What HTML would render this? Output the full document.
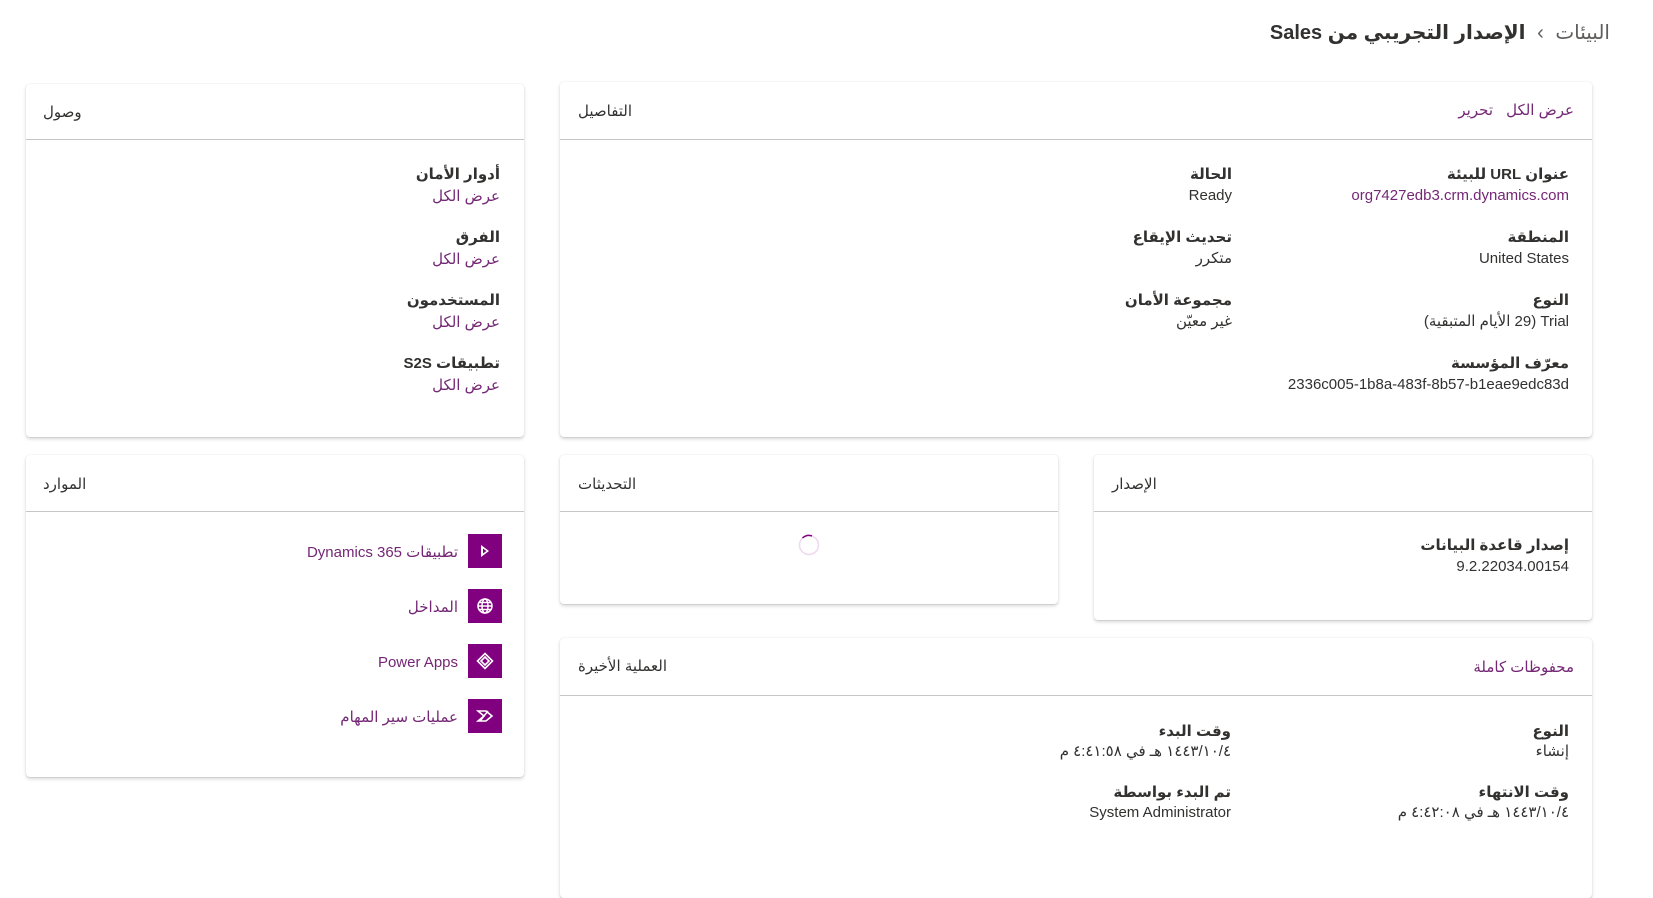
<!DOCTYPE html>
<html><head><meta charset="utf-8">
<style>
*{margin:0;padding:0;box-sizing:border-box}
body{width:1653px;height:835px;overflow:hidden;background:#fff;font-family:"Liberation Sans","DejaVu Sans",sans-serif;color:#323130;position:relative}
.card{position:absolute;background:#fff;border-radius:4px;box-shadow:0 1.6px 3.6px rgba(0,0,0,.16),0 0.3px 0.9px rgba(0,0,0,.12)}
.hl{position:absolute;left:0;right:0;height:1px;background:#c8c6c4}
.t{position:absolute;white-space:nowrap;font-size:15px;line-height:20px;direction:rtl}
.b{font-weight:bold;font-size:15px}
.p{color:#742774}
.ht{position:absolute;font-size:15px;line-height:20px;white-space:nowrap}
.ic{position:absolute;width:34px;height:34px;background:#80007f;display:flex;align-items:center;justify-content:center}
</style></head><body>

<div class="t" style="right:43px;top:20px;font-size:20px;line-height:26px"><span style="color:#605e5c">البيئات</span> <span style="color:#605e5c;font-size:20px;margin:0 6px">&rsaquo;</span> <span style="font-weight:bold">الإصدار التجريبي من Sales</span></div>

<!-- Access card -->
<div class="card" style="left:26px;top:84px;width:498px;height:353px">
  <div class="ht" style="left:17px;top:19px">وصول</div>
  <div class="hl" style="top:55px"></div>
</div>
<div class="t b" style="right:1153px;top:165px">أدوار الأمان</div>
<div class="t p" style="right:1153px;top:187px">عرض الكل</div>
<div class="t b" style="right:1153px;top:228px">الفرق</div>
<div class="t p" style="right:1153px;top:250px">عرض الكل</div>
<div class="t b" style="right:1153px;top:291px">المستخدمون</div>
<div class="t p" style="right:1153px;top:313px">عرض الكل</div>
<div class="t b" style="right:1153px;top:354px">تطبيقات S2S</div>
<div class="t p" style="right:1153px;top:376px">عرض الكل</div>

<!-- Details card -->
<div class="card" style="left:560px;top:82px;width:1032px;height:355px">
  <div class="ht" style="left:18px;top:20px">التفاصيل</div>
  <div class="hl" style="top:57px"></div>
</div>
<div class="t p" style="right:79px;top:101px">عرض الكل</div>
<div class="t p" style="right:160px;top:101px">تحرير</div>

<div class="t b" style="right:84px;top:165px">عنوان URL للبيئة</div>
<div class="t p" style="right:84px;top:186px">org7427edb3.crm.dynamics.com</div>
<div class="t b" style="right:84px;top:228px">المنطقة</div>
<div class="t" style="right:84px;top:249px">United States</div>
<div class="t b" style="right:84px;top:291px">النوع</div>
<div class="t" style="right:84px;top:312px">Trial (29 الأيام المتبقية)</div>
<div class="t b" style="right:84px;top:354px">معرّف المؤسسة</div>
<div class="t" style="right:84px;top:375px">2336c005-1b8a-483f-8b57-b1eae9edc83d</div>

<div class="t b" style="right:421px;top:165px">الحالة</div>
<div class="t" style="right:421px;top:186px">Ready</div>
<div class="t b" style="right:421px;top:228px">تحديث الإيقاع</div>
<div class="t" style="right:421px;top:249px">متكرر</div>
<div class="t b" style="right:421px;top:291px">مجموعة الأمان</div>
<div class="t" style="right:421px;top:312px">غير معيّن</div>

<!-- Resources card -->
<div class="card" style="left:26px;top:455px;width:498px;height:322px">
  <div class="ht" style="left:17px;top:20px">الموارد</div>
  <div class="hl" style="top:56px"></div>
</div>
<div class="ic" style="left:468px;top:534px"><svg width="16" height="16" viewBox="0 0 16 16"><path d="M4 2 L12 8 L4 14 Z M6 5.5 L6 10.5 L9.5 8 Z" fill="#fff" fill-rule="evenodd"/></svg></div>
<div class="t p" style="right:1195px;top:543px">تطبيقات Dynamics 365</div>
<div class="ic" style="left:468px;top:589px"><svg width="18" height="18" viewBox="0 0 18 18" fill="none" stroke="#fff" stroke-width="1.5"><circle cx="9" cy="9" r="7"/><ellipse cx="9" cy="9" rx="3" ry="7"/><path d="M2 9h14M3 5.5h12M3 12.5h12"/></svg></div>
<div class="t p" style="right:1195px;top:598px">المداخل</div>
<div class="ic" style="left:468px;top:644px"><svg width="18" height="18" viewBox="0 0 18 18" fill="none" stroke="#fff" stroke-width="1.6"><path d="M9 1.5 L16.5 9 L9 16.5 L1.5 9 Z"/><path d="M9 5 L13 9 L9 13 L5 9 Z"/></svg></div>
<div class="t p" style="right:1195px;top:653px">Power Apps</div>
<div class="ic" style="left:468px;top:699px"><svg width="18" height="18" viewBox="0 0 18 18" fill="none" stroke="#fff" stroke-width="1.6"><path d="M2 4h8l6 5-6 5H2l6-5z"/><path d="M4 14L12 4"/></svg></div>
<div class="t p" style="right:1195px;top:708px">عمليات سير المهام</div>

<!-- Updates card -->
<div class="card" style="left:560px;top:455px;width:498px;height:149px">
  <div class="ht" style="left:18px;top:20px">التحديثات</div>
  <div class="hl" style="top:56px"></div>
</div>
<svg style="position:absolute;left:798px;top:534px" width="22" height="22" viewBox="0 0 22 22"><circle cx="11" cy="11" r="9.5" fill="none" stroke="#efd9ef" stroke-width="1.5"/><path d="M4.5 4 A9.5 9.5 0 0 1 14 2" fill="none" stroke="#80007f" stroke-width="1.5"/></svg>

<!-- Version card -->
<div class="card" style="left:1094px;top:455px;width:498px;height:165px">
  <div class="ht" style="left:18px;top:20px">الإصدار</div>
  <div class="hl" style="top:56px"></div>
</div>
<div class="t b" style="right:84px;top:536px">إصدار قاعدة البيانات</div>
<div class="t" style="right:84px;top:557px">9.2.22034.00154</div>

<!-- Recent op -->
<div class="card" style="left:560px;top:638px;width:1032px;height:260px">
  <div class="ht" style="left:18px;top:19px">العملية الأخيرة</div>
  <div class="hl" style="top:57px"></div>
</div>
<div class="t p" style="right:79px;top:658px">محفوظات كاملة</div>
<div class="t b" style="right:84px;top:722px">النوع</div>
<div class="t" style="right:84px;top:742px">إنشاء</div>
<div class="t b" style="right:84px;top:783px">وقت الانتهاء</div>
<div class="t" style="right:84px;top:803px">١٤٤٣/١٠/٤ هـ في ٤:٤٢:٠٨ م</div>
<div class="t b" style="right:422px;top:722px">وقت البدء</div>
<div class="t" style="right:422px;top:742px">١٤٤٣/١٠/٤ هـ في ٤:٤١:٥٨ م</div>
<div class="t b" style="right:422px;top:783px">تم البدء بواسطة</div>
<div class="t" style="right:422px;top:803px">System Administrator</div>

</body></html>
